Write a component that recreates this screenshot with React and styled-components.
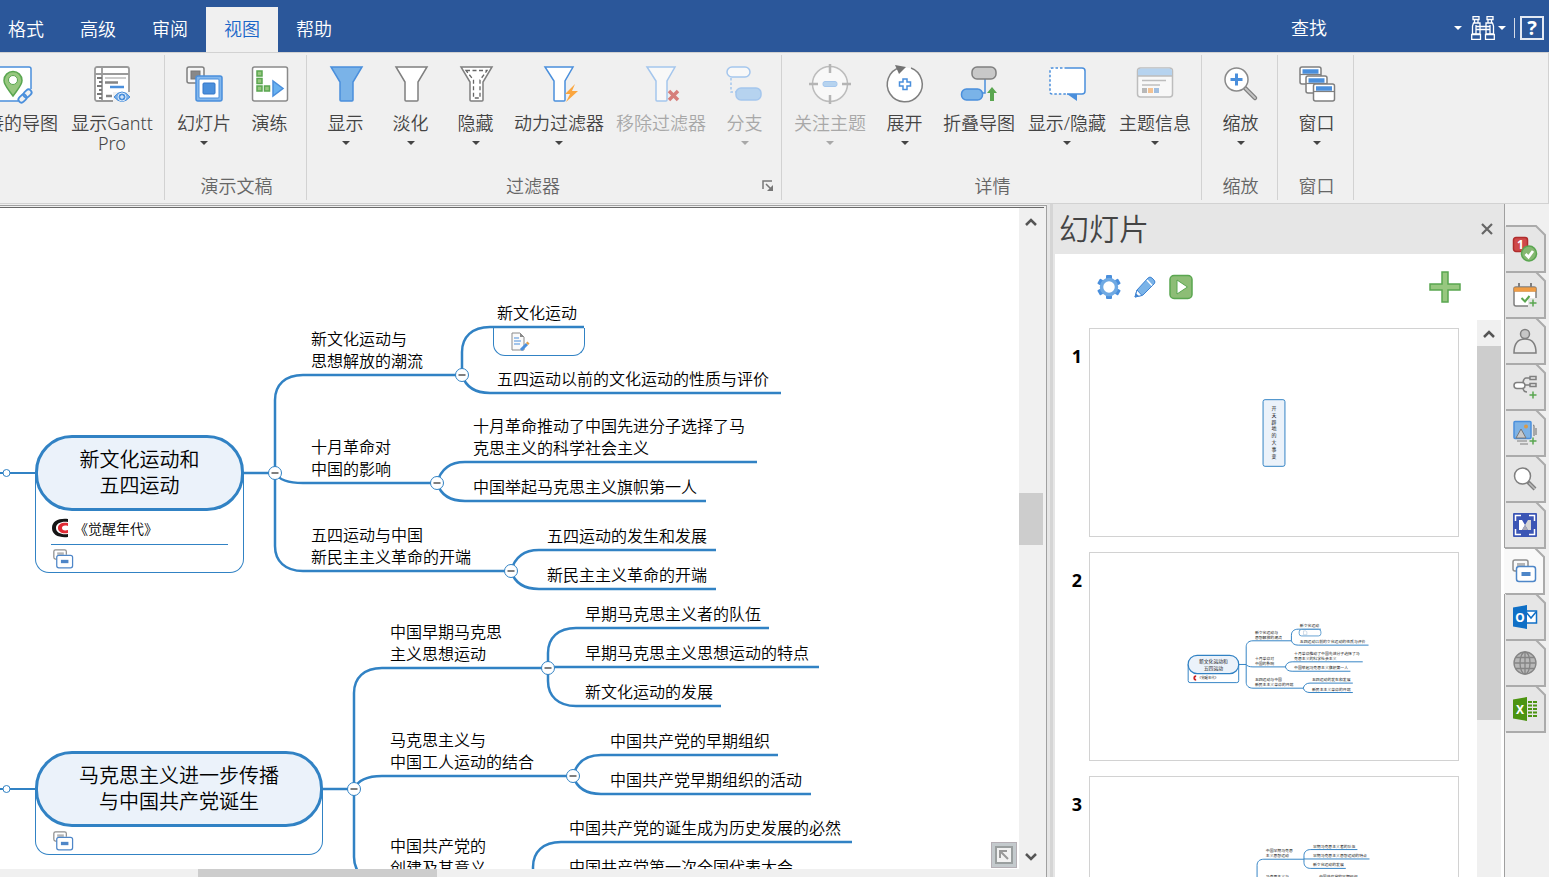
import React, { useState } from 'react';
import styled, { createGlobalStyle } from 'styled-components';

const BLUE = '#4a8fdc';
const LINE = '#3182c4';
const GRAY = '#7f7f7f';
const GREEN = '#5aa650';

const MENU_TABS = ['格式', '高级', '审阅', '视图', '帮助'];

/* ---------- mind map data ---------- */

const BRANCHES = [
  {
    id: 'may4',
    x: 35,
    y: 227,
    width: 209,
    text: ['新文化运动和', '五四运动'],
    link: '《觉醒年代》',
    hub: 275,
    children: [
      {
        x: 311, y: 167, hub: 462, text: ['新文化运动与', '思想解放的潮流'],
        children: [
          { x: 497, y: 119, end: 584, text: ['新文化运动'], note: true },
          { x: 497, y: 185, end: 781, text: ['五四运动以前的文化运动的性质与评价'] },
        ],
      },
      {
        x: 311, y: 275, hub: 437, text: ['十月革命对', '中国的影响'],
        children: [
          { x: 473, y: 254, end: 757, text: ['十月革命推动了中国先进分子选择了马', '克思主义的科学社会主义'] },
          { x: 473, y: 293, end: 706, text: ['中国举起马克思主义旗帜第一人'] },
        ],
      },
      {
        x: 311, y: 363, hub: 511, text: ['五四运动与中国', '新民主主义革命的开端'],
        children: [
          { x: 547, y: 342, end: 716, text: ['五四运动的发生和发展'] },
          { x: 547, y: 381, end: 716, text: ['新民主主义革命的开端'] },
        ],
      },
    ],
  },
  {
    id: 'marx',
    x: 35,
    y: 543,
    width: 288,
    text: ['马克思主义进一步传播', '与中国共产党诞生'],
    hub: 354,
    children: [
      {
        x: 390, y: 460, hub: 548, text: ['中国早期马克思', '主义思想运动'],
        children: [
          { x: 585, y: 420, end: 769, text: ['早期马克思主义者的队伍'] },
          { x: 585, y: 459, end: 819, text: ['早期马克思主义思想运动的特点'] },
          { x: 585, y: 498, end: 721, text: ['新文化运动的发展'] },
        ],
      },
      {
        x: 390, y: 568, hub: 573, text: ['马克思主义与', '中国工人运动的结合'],
        children: [
          { x: 610, y: 547, end: 778, text: ['中国共产党的早期组织'] },
          { x: 610, y: 586, end: 811, text: ['中国共产党早期组织的活动'] },
        ],
      },
      {
        x: 390, y: 674, hub: 533, text: ['中国共产党的', '创建及其意义'],
        children: [
          { x: 569, y: 634, end: 852, text: ['中国共产党的诞生成为历史发展的必然'] },
          { x: 569, y: 673, end: 804, text: ['中国共产党第一次全国代表大会'] },
        ],
      },
    ],
  },
];

// Rounded connector from a hub to the underline of a child topic
const connector = (hx, hy, cy, end) => {
  const dy = cy - hy;
  if (Math.abs(dy) < 2) return `M${hx} ${cy}H${end}`;
  if (Math.abs(dy) > 25) {
    const turn = dy > 0 ? cy - 25 : cy + 25;
    return `M${hx} ${hy}V${turn}C${hx} ${turn + (cy - turn) * 0.6} ${hx + 10} ${cy} ${hx + 28} ${cy}H${end}`;
  }
  return `M${hx} ${hy}C${hx + 4} ${hy + dy * 0.7} ${hx + 14} ${cy} ${hx + 28} ${cy}H${end}`;
};

const Connectors = ({ branch, thickness = 2.5 }) => {
  const middle = branch.y + 38;
  return (
    <g fill="none" stroke={LINE} strokeWidth={thickness}>
      <path d={`M${branch.x + branch.width} ${middle}H${branch.hub}`} />
      {branch.children.map((topic) => (
        <g key={topic.y}>
          <path d={connector(branch.hub, middle, topic.y, topic.hub)} />
          {topic.children.map((leaf) => (
            <path key={leaf.y} d={connector(topic.hub, topic.y, leaf.y, leaf.end)} />
          ))}
        </g>
      ))}
    </g>
  );
};

const Hub = ({ x, y }) => (
  <g>
    <circle cx={x} cy={y} r="6.5" fill="#fff" stroke={LINE} strokeWidth="1" />
    <path d={`M${x - 3.5} ${y}h7`} stroke="#555" strokeWidth="1.5" />
  </g>
);

/* ---------- icons ---------- */

const FUNNEL = 'M5 3H36L27 18V36Q27 37 26 37H15Q14 37 14 36V18Z';
const SLIM_FUNNEL = 'M6 3H34L26 17V36Q26 37 25 37H16Q15 37 15 36V17Z';

const ribbonIcons = {
  map: (
    <>
      <rect x="2" y="3" width="36" height="34" rx="2" fill="#fff" stroke={BLUE} strokeWidth="1.5" />
      <path d="M20 32C15 25 11 21 11 16.500a9 9 0 0 1 18 0C29 21 25 25 20 32Z" fill="#97c77f" stroke={GREEN} strokeWidth="1.500" />
      <circle cx="20" cy="16" r="4.500" fill="#fff" stroke={GREEN} />
      <path d="M25 34L34 25H40V40H25Z" fill="#f0f0f0" />
      <g fill="none" stroke={BLUE} strokeWidth="1.800" transform="rotate(-45 32 32)">
        <rect x="24" y="29" width="9" height="6" rx="3" />
        <rect x="31" y="29" width="9" height="6" rx="3" />
      </g>
    </>
  ),
  gantt: (
    <>
      <rect x="3" y="3" width="34" height="34" rx="2" fill="#fff" stroke="#9a9a9a" strokeWidth="1.800" />
      <path d="M3 10H37M10 3V37" stroke="#9a9a9a" strokeWidth="1.800" />
      <path d="M5 14h5M7 18h3M5 22h5M7 26h3M5 30h5M7 34h3" stroke="#777" strokeWidth="2" />
      <path d="M13 14H34" stroke="#ccc" strokeWidth="2" />
      <path d="M13 18.500H26" stroke="#858585" strokeWidth="2.500" />
      <path d="M18 23H32" stroke={BLUE} strokeWidth="2.500" />
      <path d="M21 28H40V40H21Z" fill="#f0f0f0" />
      <path d="M14 32H20" stroke="#858585" strokeWidth="2.500" />
      <path d="M22 33Q30 23 38 33Q30 42 22 33Z" fill="#79aee6" stroke={BLUE} />
      <circle cx="30" cy="33" r="4" fill={BLUE} stroke="#dbeafa" />
      <path d="M30 31v4M28 33h4" stroke="#fff" />
    </>
  ),
  slides: (
    <>
      <rect x="3" y="3" width="17" height="16" rx="2" fill="#f6f6f6" stroke={GRAY} strokeWidth="1.500" />
      <rect x="7" y="7" width="9" height="8" fill="#888" stroke="#777" />
      <rect x="12" y="12" width="26" height="25" rx="2" fill="#82b7ed" stroke={BLUE} strokeWidth="1.500" />
      <rect x="15" y="15" width="20" height="19" rx="1" fill="#fff" stroke={BLUE} />
      <rect x="19" y="19" width="12" height="11" rx="1" fill={BLUE} stroke="#3477c8" />
    </>
  ),
  rehearse: (
    <>
      <rect x="2.500" y="3" width="35" height="34" rx="2" fill="#fff" stroke="#8a8a8a" strokeWidth="1.500" />
      <g fill="#97c77f" stroke={GREEN} strokeWidth="1.500">
        <rect x="7" y="7" width="5" height="5" />
        <rect x="7" y="14.500" width="5" height="5" />
        <rect x="7" y="22" width="5" height="5" />
        <rect x="14.500" y="22" width="5" height="5" />
      </g>
      <path d="M23 17V32L33 24.500Z" fill="#68b1f0" stroke={BLUE} strokeWidth="1.500" />
    </>
  ),
  show: <path d={FUNNEL} fill="#7ab3e8" stroke={BLUE} strokeWidth="1.500" />,
  fade: <path d={FUNNEL} fill="#fff" stroke={GRAY} strokeWidth="1.500" />,
  hide: (
    <>
      <path d={FUNNEL} fill="#fff" stroke={GRAY} strokeWidth="1.500" />
      <path d="M10 6.500H31L24 16V34H17.500V16Z" fill="none" stroke="#666" strokeWidth="1.300" strokeDasharray="4 2.500" />
    </>
  ),
  power: (
    <>
      <path d={SLIM_FUNNEL} fill="#fff" stroke={BLUE} strokeWidth="1.500" />
      <path d="M36 20L26 30H31L27 38L39 27H33Z" fill="#fba63f" />
    </>
  ),
  remove: (
    <>
      <path d={SLIM_FUNNEL} fill="#f8f8f8" stroke="#a4c6ed" strokeWidth="1.500" />
      <path d="M28 27L37 36M37 27L28 36" stroke="#d67e7b" strokeWidth="3.500" />
    </>
  ),
  branch: (
    <>
      <path d="M6 14V28H11" fill="none" stroke="#a4c6ed" strokeWidth="1.500" strokeDasharray="2.500 2" />
      <rect x="2" y="3" width="23" height="10" rx="5" fill="#f8f8f8" stroke="#a4c6ed" strokeWidth="1.500" />
      <rect x="11" y="24" width="25" height="12" rx="5" fill="#b6d3ef" stroke="#a4c6ed" strokeWidth="1.500" />
    </>
  ),
  focus: (
    <>
      <circle cx="20" cy="20" r="17.500" fill="#f8f8f8" stroke="#bdbdbd" strokeWidth="1.500" />
      <path d="M20 0V9M20 31V40M-1 20H8M32 20H41" stroke="#b5b5b5" strokeWidth="2.500" />
      <rect x="13" y="17.500" width="14" height="5" rx="2" fill="#b6d3ef" stroke="#a4c6ed" />
    </>
  ),
  expand: (
    <>
      <path d="M15 3.500A17.500 17.500 0 1 0 26 4" fill="#fff" stroke={GRAY} strokeWidth="1.500" />
      <path d="M10 1L21 3L14 10Z" fill="#737373" />
      <path d="M18 15h4v3h3.500v4H22v3.500h-4V22h-3.500v-4H18Z" fill="#fff" stroke={BLUE} strokeWidth="1.500" />
    </>
  ),
  collapse: (
    <>
      <path d="M26 15V29H22" fill="none" stroke={BLUE} strokeWidth="1.500" />
      <rect x="13" y="3" width="24" height="12" rx="5" fill="#c8c8c8" stroke={GRAY} strokeWidth="1.500" />
      <rect x="2.500" y="25" width="21" height="11" rx="5" fill="#7ab3e8" stroke={BLUE} strokeWidth="1.500" />
      <path d="M33 23L38 29H35V37H31V29H28Z" fill={GREEN} />
    </>
  ),
  callout: (
    <>
      <path d="M20 4H5Q3 4 3 6V28Q3 30 5 30H20Z" fill="#fff" />
      <path d="M20 4H35Q38 4 38 7V27Q38 30 35 30H20" fill="#fff" stroke={BLUE} strokeWidth="1.500" />
      <path d="M20 4H5Q3 4 3 6V28Q3 30 5 30H20" fill="none" stroke={BLUE} strokeWidth="1.500" strokeDasharray="2.500 2" />
      <path d="M20 30H30V37Z" fill={BLUE} />
    </>
  ),
  info: (
    <>
      <rect x="2.500" y="4" width="35" height="29" rx="3" fill="#f8f8f8" stroke="#bdbdbd" strokeWidth="1.500" />
      <path d="M3 12V7Q3 4.500 6 4.500H34Q37 4.500 37 7V12Z" fill="#b6d3ef" />
      <path d="M3 12H37" stroke="#bdbdbd" strokeWidth="1.500" />
      <path d="M7 16.500H31M7 21H25" stroke="#bdbdbd" strokeWidth="1.300" />
      <path d="M7 24h5v5h-5Z" fill="#b8b8b8" />
      <path d="M13 24h5v5h-5Z" fill="#f3c293" />
      <path d="M19 24h5v5h-5Z" fill="#a1bedf" />
    </>
  ),
  zoom: (
    <>
      <path d="M24 24L34 34" stroke={GRAY} strokeWidth="4.500" strokeLinecap="round" />
      <path d="M24 24L34 34" stroke="#c5c5c5" strokeWidth="1.800" strokeLinecap="round" />
      <circle cx="15.500" cy="15.500" r="11.500" fill="#fff" stroke="#8a8a8a" strokeWidth="1.500" />
      <path d="M15.500 9.500V21.500M9.500 15.500H21.500" stroke={BLUE} strokeWidth="3" />
    </>
  ),
  windows: (
    <>
      {[[3, 3], [9, 12], [16.5, 20]].map(([x, y]) => (
        <g key={x}>
          <rect x={x} y={y} width="21" height="17" rx="2" fill="#fff" stroke={GRAY} strokeWidth="1.500" />
          <path d={`M${x + 2.5} ${y + 4.5}h16`} stroke={BLUE} strokeWidth="4.500" />
          <path d={`M${x} ${y + 7.5}h21`} stroke={GRAY} strokeWidth="1.200" />
        </g>
      ))}
    </>
  ),
};

const greenPlus = <path d="M20 16.500V23.500M16.500 20H23.500" stroke={GREEN} strokeWidth="1.500" />;

const cards = (
  <>
    <path d="M5 12H3Q1 12 1 10V3Q1 1 3 1H14Q16 1 16 3V7" fill="none" stroke="#8f8f8f" strokeWidth="1.500" />
    <path d="M5 4h8v3H5Z" fill="#b5b5b5" />
    <rect x="4.500" y="7.500" width="19" height="15" rx="2.500" fill="#fff" stroke="#4e86c8" strokeWidth="1.500" />
    <rect x="9.500" y="13" width="9" height="4" fill="#4e86c8" />
  </>
);

const sideIcons = {
  priority: (
    <>
      <rect x="0.500" y="0.500" width="14" height="14" rx="2.500" fill="#cf4a4a" stroke="#b02c2c" strokeWidth="1.500" />
      <text x="7.500" y="12" textAnchor="middle" fontSize="12" fontWeight="700" fill="#fff">1</text>
      <circle cx="16" cy="16.500" r="7.500" fill="#86b872" stroke={GREEN} strokeWidth="1.500" />
      <path d="M12.500 17L15.500 20L20 14" fill="none" stroke="#fff" strokeWidth="2.800" />
    </>
  ),
  calendar: (
    <>
      <rect x="1" y="4" width="22" height="19" rx="2" fill="#fff" stroke={GRAY} strokeWidth="1.500" />
      <path d="M1 4.500H23V8.500H1Z" fill="#f09d45" stroke="#c98238" strokeWidth="0.500" />
      <path d="M6 0V4M18 0V4" stroke={GRAY} strokeWidth="2" />
      <path d="M15 15H25V25H15Z" fill="#e6e6e6" />
      <path d="M8.500 15L12 18.500L16.500 13" fill="none" stroke={GREEN} strokeWidth="2" />
      {greenPlus}
    </>
  ),
  person: (
    <>
      <path d="M1 24Q1 10 12 10T23 24Z" fill="#e9e9e9" stroke={GRAY} strokeWidth="1.500" />
      <circle cx="12" cy="5" r="4.500" fill="#c6c6c6" stroke={GRAY} strokeWidth="1.500" />
    </>
  ),
  tree: (
    <g fill="none" stroke={GRAY} strokeWidth="1.500">
      <path d="M12 10H17M17 3H13Q11 3 10 7M10 14Q11 17 14 17" />
      <rect x="1" y="7.500" width="11" height="6" rx="3" fill="#fff" />
      <rect x="17" y="1.500" width="6" height="3" />
      <rect x="17" y="8.500" width="6" height="3" />
      {greenPlus}
    </g>
  ),
  images: (
    <>
      <path d="M20 4Q21 4 21 5V15M23 7V14M4 20H14M7 23H15" fill="none" stroke={GRAY} strokeWidth="1.200" />
      <rect x="1" y="0.500" width="17" height="17" rx="1" fill="#7db2e5" stroke={BLUE} strokeWidth="1.500" />
      <circle cx="13" cy="5.500" r="2" fill="#d99a48" />
      <path d="M3 17L8 8L13 17Z" fill="#c9c9c9" stroke="#777" />
      {greenPlus}
    </>
  ),
  search: (
    <>
      <path d="M15 15L22 22" stroke={GRAY} strokeWidth="4" />
      <path d="M16 16L22 22" stroke="#bbb" strokeWidth="1.500" />
      <circle cx="9.500" cy="9" r="8" fill="#fff" stroke={GRAY} strokeWidth="1.500" />
    </>
  ),
  focusMap: (
    <>
      <rect width="24" height="24" rx="1" fill="#3b55b5" />
      <path d="M2.500 8V2.500H8M16 2.500H21.500V8M21.500 16V21.500H16M8 21.500H2.500V16" fill="none" stroke="#fff" strokeWidth="1.500" />
      <path d="M6 7H9L12 12L9 17H6Z" fill="#fff" />
      <path d="M18 7H15L12 12L15 17H18Z" fill="#d5d5d5" />
      <path d="M12 12L15 17H9Z" fill="#a9a9b5" />
    </>
  ),
  slides: cards,
  outlook: (
    <>
      <path d="M12 6H23.500V18H12Z" fill="#fff" stroke="#0f6fc6" strokeWidth="1.500" />
      <path d="M13 7L18 13L23 7" fill="none" stroke="#0f6fc6" strokeWidth="1.500" />
      <path d="M0 2.500L14 0V24L0 21.500Z" fill="#0f6fc6" />
      <text x="7" y="16.500" textAnchor="middle" fontSize="12" fontWeight="700" fill="#fff">O</text>
    </>
  ),
  globe: (
    <g fill="none" stroke="#858585" strokeWidth="1.300">
      <circle cx="12" cy="12" r="11" fill="#b8b8b8" />
      <ellipse cx="12" cy="12" rx="5" ry="11" />
      <path d="M12 1V23M1 12H23M3 6.500H21M3 17.500H21" />
    </g>
  ),
  excel: (
    <>
      <path d="M15 5h4M20 5h4M15 8.500h4M20 8.500h4M15 12h4M20 12h4M15 15.500h4M20 15.500h4M15 19h4M20 19h4" stroke="#4c9411" strokeWidth="2" />
      <path d="M0 2.500L14 0V24L0 21.500Z" fill="#4c9411" />
      <text x="7" y="16.500" textAnchor="middle" fontSize="12" fontWeight="700" fill="#fff">X</text>
    </>
  ),
};

const RIBBON_GROUPS = [
  {
    name: '',
    items: [
      { label: '链接的导图', icon: 'map' },
      { label: '显示Gantt', second: 'Pro', icon: 'gantt', width: 96 },
    ],
  },
  {
    name: '演示文稿',
    items: [
      { label: '幻灯片', icon: 'slides', menu: true },
      { label: '演练', icon: 'rehearse' },
    ],
  },
  {
    name: '过滤器',
    launcher: true,
    items: [
      { label: '显示', icon: 'show', menu: true },
      { label: '淡化', icon: 'fade', menu: true },
      { label: '隐藏', icon: 'hide', menu: true },
      { label: '动力过滤器', icon: 'power', menu: true },
      { label: '移除过滤器', icon: 'remove', disabled: true },
      { label: '分支', icon: 'branch', menu: true, disabled: true },
    ],
  },
  {
    name: '详情',
    items: [
      { label: '关注主题', icon: 'focus', menu: true, disabled: true },
      { label: '展开', icon: 'expand', menu: true },
      { label: '折叠导图', icon: 'collapse' },
      { label: '显示/隐藏', icon: 'callout', menu: true, width: 92 },
      { label: '主题信息', icon: 'info', menu: true },
    ],
  },
  { name: '缩放', items: [{ label: '缩放', icon: 'zoom', menu: true }] },
  { name: '窗口', items: [{ label: '窗口', icon: 'windows', menu: true }] },
];

const SIDE_TABS = [
  ['priority', '标记'],
  ['calendar', '任务信息'],
  ['person', '资源'],
  ['tree', '导图部件'],
  ['images', '图库'],
  ['search', '搜索'],
  ['focusMap', '对焦'],
  ['slides', '幻灯片'],
  ['outlook', 'Outlook'],
  ['globe', '浏览器'],
  ['excel', 'Excel'],
];

const Chevron = ({ down }) => (
  <svg width="14" height="10" viewBox="0 0 14 10" aria-hidden="true">
    <path d={down ? 'M2 2L7 7L12 2' : 'M2 8L7 3L12 8'} fill="none" stroke="#555" strokeWidth="2.500" />
  </svg>
);

/* ---------- thumbnails ---------- */

const BranchPreview = ({ branch, viewBox }) => (
  <Preview viewBox={viewBox} role="img" aria-label={branch.text.join('')}>
    <Connectors branch={branch} thickness={4} />
    <path
      d={`M${branch.x} ${branch.y + 37}v68q0 8 8 8h${branch.width - 16}q8 0 8 -8v-68`}
      fill="none"
      stroke={LINE}
      strokeWidth="4"
    />
    <rect x={branch.x} y={branch.y} width={branch.width} height="76" rx="37" fill="#ebf2fa" stroke={LINE} strokeWidth="5" />
    {branch.text.map((line, i) => (
      <text key={line} x={branch.x + branch.width / 2} y={branch.y + 33 + i * 26} fontSize="20" textAnchor="middle">{line}</text>
    ))}
    {branch.link && (
      <>
        <path d="M68 313a8 8 0 0 0 0 16" fill="none" stroke="#c22" strokeWidth="7" />
        <text x="75" y="326" fontSize="14">{branch.link}</text>
      </>
    )}
    {branch.children.flatMap((topic) => [topic, ...topic.children]).map((topic) => (
      <g key={topic.text[0]}>
        {topic.text.map((line, i) => (
          <text key={line} x={topic.x} y={topic.y - 8 - (topic.text.length - 1 - i) * 22} fontSize="16">{line}</text>
        ))}
        {topic.note && (
          <>
            <rect x="494" y="120" width="90" height="27" rx="10" fill="#fff" stroke={LINE} strokeWidth="3" />
            <path d="M512 126h10l4 4v12h-14Z" fill="none" stroke="#9db8d4" strokeWidth="2" />
          </>
        )}
      </g>
    ))}
  </Preview>
);

const CoverPreview = () => (
  <Preview viewBox="0 0 370 208" role="img" aria-label="开天辟地的大事变">
    <rect x="174" y="71" width="22" height="67" rx="2" fill="#ebf2fa" stroke={LINE} />
    {[...'开天辟地的大事变'].map((char, i) => (
      <text key={char} x="185" y={81 + i * 7} fontSize="5" textAnchor="middle">{char}</text>
    ))}
  </Preview>
);

const SLIDES = [
  <CoverPreview />,
  <BranchPreview branch={BRANCHES[0]} viewBox="-371 -196 1522 856" />,
  <BranchPreview branch={BRANCHES[1]} viewBox="-337 120 1522 856" />,
];

const MindMap = () => (
  <MapArea>
    <MapLines aria-hidden="true">
      {BRANCHES.map((branch) => (
        <g key={branch.id}>
          <path d={`M0 ${branch.y + 38}H${branch.x}`} stroke={LINE} strokeWidth="2" />
          <circle cx="6.500" cy={branch.y + 38} r="3.500" fill="#fff" stroke={LINE} />
          <Connectors branch={branch} />
          {branch.children.map((topic) => <Hub key={topic.y} x={topic.hub} y={topic.y} />)}
          <Hub x={branch.hub} y={branch.y + 38} />
        </g>
      ))}
    </MapLines>
    {BRANCHES.map((branch) => (
      <React.Fragment key={branch.id}>
        <MainTopic $x={branch.x} $y={branch.y} $width={branch.width}>
          <Pill>{branch.text.map((line) => <div key={line}>{line}</div>)}</Pill>
          <Attachments>
            {branch.link && (
              <LinkRow href="#juexing">
                <svg width="18" height="20" viewBox="0 0 18 20" aria-hidden="true">
                  <path d="M17 1C8 0 1 3 1 10S8 20 17 19V16C11 17 5 15 5 10S11 3 17 4Z" fill="#151515" />
                  <path d="M17 5C11 4 7 6 7 10S11 16 17 15V12C13 13 11 12 11 10S13 7 17 8Z" fill="#e02b35" />
                </svg>
                {branch.link}
              </LinkRow>
            )}
            <CardRow>
              <svg width="20" height="20" viewBox="0 0 24 24" aria-hidden="true">{cards}</svg>
            </CardRow>
          </Attachments>
        </MainTopic>
        {branch.children.flatMap((topic) => [topic, ...topic.children]).map((topic) => (
          <Topic key={topic.text[0]} $x={topic.x} $y={topic.y - 3 - topic.text.length * 22}>
            {topic.text.map((line) => <div key={line}>{line}</div>)}
          </Topic>
        ))}
      </React.Fragment>
    ))}
    <NoteBox>
      <svg width="20" height="20" viewBox="0 0 20 20" aria-hidden="true">
        <path d="M2 1H10L14 5V18H2Z" fill="#fafafa" stroke="#8a8a8a" />
        <path d="M10 1V5H14Z" fill="#8a8a8a" />
        <path d="M4 6h5M4 9h7M4 12h6" stroke={BLUE} />
        <path d="M11 18L17 12" stroke={BLUE} strokeWidth="3" />
        <path d="M17 12L18.500 10.500" stroke="#e0a050" strokeWidth="3" />
      </svg>
    </NoteBox>
    <OverviewButton aria-label="导图概览">
      <svg width="14" height="14" viewBox="0 0 14 14">
        <path d="M3 10V3H10M4 4L11 11" fill="none" stroke="#999" strokeWidth="2" />
      </svg>
    </OverviewButton>
  </MapArea>
);

export default function App() {
  const [menuTab, setMenuTab] = useState('视图');
  const [sideTab, setSideTab] = useState('slides');
  const [query, setQuery] = useState('查找');

  return (
    <Window>
      <GlobalStyle />
      <TopBar>
        <MenuTabs>
          {MENU_TABS.map((tab) => (
            <MenuTab key={tab} $active={tab === menuTab} onClick={() => setMenuTab(tab)}>{tab}</MenuTab>
          ))}
        </MenuTabs>
        <SearchTools>
          <SearchInput aria-label="查找" value={query} onChange={(e) => setQuery(e.target.value)} />
          <ArrowButton aria-label="查找历史"><Caret /></ArrowButton>
          <BinocularButton aria-label="开始查找">
            <svg width="24" height="24" viewBox="0 0 24 24" fill="none" stroke="#fff" strokeWidth="1.300">
              <path d="M2 0.700H8V3.500H2ZM16 0.700H22V3.500H16ZM3.500 3.500V7M7 3.500V7M17 3.500V7M20.500 3.500V7" />
              <path d="M2.500 7H9V18H1.500V10ZM15 7H21.500L22.500 10V18H15ZM5 9V18M19 9V18M5 10.500H19M5 13.500H19" />
              <path d="M0.700 18.500H9.500V23.300H0.700ZM14.500 18.500H23.300V23.300H14.500Z" />
            </svg>
          </BinocularButton>
          <ArrowButton aria-label="查找选项"><Caret /></ArrowButton>
          <Divider />
          <HelpButton aria-label="帮助">?</HelpButton>
        </SearchTools>
      </TopBar>

      <Ribbon>
        <RibbonGroups>
          {RIBBON_GROUPS.map((group) => (
            <Group key={group.name}>
              <GroupItems>
                {group.items.map((item) => (
                  <RibbonButton key={item.label} disabled={item.disabled} $width={item.width}>
                    <RibbonIcon viewBox="0 0 40 40" aria-hidden="true">{ribbonIcons[item.icon]}</RibbonIcon>
                    <span>{item.label}</span>
                    {item.second && <span>{item.second}</span>}
                    {item.menu && <MenuCaret />}
                  </RibbonButton>
                ))}
              </GroupItems>
              <GroupFooter $launcher={group.launcher}>
                {group.name}
                {group.launcher && (
                  <Launcher aria-label="过滤器选项">
                    <svg width="12" height="12" viewBox="0 0 12 12">
                      <path d="M1 9V1H10M4 4L9 9" fill="none" stroke="#777" strokeWidth="1.500" />
                      <path d="M11 5V11H5Z" fill="#777" />
                    </svg>
                  </Launcher>
                )}
              </GroupFooter>
            </Group>
          ))}
        </RibbonGroups>
      </Ribbon>

      <Workspace>
        <CanvasFrame>
          <CanvasInner>
            <MindMap />
            <Scrollbar>
              <ScrollButton aria-label="向上滚动"><Chevron /></ScrollButton>
              <ScrollTrack $before={259} $thumb={52}><i /></ScrollTrack>
              <ScrollButton aria-label="向下滚动"><Chevron down /></ScrollButton>
            </Scrollbar>
            <HorizontalBar><i /></HorizontalBar>
          </CanvasInner>
        </CanvasFrame>
        <Splitter />
        <Panel>
          <PanelHeader>
            <PanelTitle>幻灯片</PanelTitle>
            <CloseButton aria-label="关闭">
              <svg width="12" height="12" viewBox="0 0 12 12">
                <path d="M1 1L11 11M11 1L1 11" stroke="#666" strokeWidth="2.200" />
              </svg>
            </CloseButton>
          </PanelHeader>
          <PanelToolbar>
            <ToolButton aria-label="设置">
              <svg width="24" height="24" viewBox="0 0 24 24">
                {[0, 60, 120, 180, 240, 300].map((angle) => (
                  <rect key={angle} x="9" y="0" width="6" height="6" rx="1" fill={BLUE} transform={`rotate(${angle} 12 12)`} />
                ))}
                <circle cx="12" cy="12" r="7.500" fill="#fff" stroke="#6fa9e3" strokeWidth="3.500" />
              </svg>
            </ToolButton>
            <ToolButton aria-label="编辑">
              <svg width="24" height="24" viewBox="0 0 24 24">
                <path d="M2 22L4 15L15 3Q17 1 19 3L21 5Q23 7 21 9L10 20Z" fill="#7ab3e8" stroke="#3f83d2" />
                <path d="M2 22L4 15L9 20.500Z" fill="#fff" stroke="#3f83d2" />
                <path d="M2 22L3 18.500L6 21Z" fill="#3f83d2" />
                <path d="M14 5L19 10.500" stroke="#fff" strokeWidth="1.500" />
              </svg>
            </ToolButton>
            <ToolButton aria-label="播放">
              <svg width="24" height="24" viewBox="0 0 24 24">
                <rect x="1" y="0.500" width="22" height="23" rx="4" fill="#8dbd76" stroke={GREEN} strokeWidth="1.500" />
                <path d="M8 5V19L18.500 12Z" fill="#fff" stroke={GREEN} />
              </svg>
            </ToolButton>
            <AddButton aria-label="新建幻灯片">
              <svg width="32" height="32" viewBox="0 0 32 32">
                <path d="M13 1H19V13H31V19H19V31H13V19H1V13H13Z" fill="#97c77f" stroke={GREEN} strokeWidth="1.500" />
              </svg>
            </AddButton>
          </PanelToolbar>
          <SlideArea>
            <SlideList>
              {SLIDES.map((slide, i) => (
                <SlideItem key={i}>
                  <SlideNumber>{i + 1}</SlideNumber>
                  <SlideFrame>{slide}</SlideFrame>
                </SlideItem>
              ))}
            </SlideList>
            <Scrollbar>
              <ScrollButton aria-label="向上滚动"><Chevron /></ScrollButton>
              <ScrollTrack $before={0} $thumb={374}><i /></ScrollTrack>
            </Scrollbar>
          </SlideArea>
        </Panel>
        <SideBar>
          {SIDE_TABS.map(([id, label]) => (
            <SideTab key={id} aria-label={label} $active={id === sideTab} onClick={() => setSideTab(id)}>
              <svg width="42" height="48" viewBox="0 0 42 48">
                <path d="M0 1H31L40 10V47H0Z" fill={id === sideTab ? '#f9f9f9' : '#e6e6e6'} />
                <path d="M1 1H31L40 10V47H1" fill="none" stroke="#ababab" strokeWidth="2" />
                <g transform="translate(8 12)">{sideIcons[id]}</g>
              </svg>
            </SideTab>
          ))}
        </SideBar>
      </Workspace>
    </Window>
  );
}

/* ---------- styles ---------- */

const GlobalStyle = createGlobalStyle`
  * {
    box-sizing: border-box;
  }

  body {
    margin: 0;
    overflow: hidden;
  }

  body, button, input {
    font-family: "Noto Sans", "Noto Sans CJK SC", sans-serif;
    font-weight: 350;
  }

  button {
    padding: 0;
    border: 0;
    background: none;
  }

  svg {
    display: block;
    overflow: visible;
  }
`;

const Window = styled.div`
  display: flex;
  flex-direction: column;
  height: 100vh;
  background: #f0f0f0;
`;

const TopBar = styled.header`
  display: flex;
  justify-content: space-between;
  flex: none;
  height: 52px;
  background: #2b579a;
  color: #fff;
`;

const MenuTabs = styled.nav`
  display: flex;
  align-items: flex-end;
  margin-left: -10px;
`;

const MenuTab = styled.button`
  width: 72px;
  height: 45px;
  padding-bottom: 2px;
  font-size: 18px;
  line-height: 24px;
  color: ${({ $active }) => ($active ? '#1a66c8' : '#fff')};
  background: ${({ $active }) => ($active ? '#f0f0f0' : 'transparent')};
`;

const SearchTools = styled.div`
  display: flex;
  align-items: center;
  padding: 4px 5px 0 0;
`;

const SearchInput = styled.input`
  width: 160px;
  padding: 0;
  border: 0;
  outline: none;
  background: transparent;
  color: #fff;
  font-size: 18px;
  line-height: 24px;
`;

const ArrowButton = styled.button`
  display: flex;
  align-items: center;
  justify-content: center;
  width: 14px;
  height: 24px;
`;

const Caret = styled.span`
  border: 4px solid transparent;
  border-top-color: currentColor;
  border-bottom: 0;
  color: #fff;
`;

const BinocularButton = styled.button`
  margin-left: 6px;
`;

const Divider = styled.span`
  width: 1px;
  height: 20px;
  margin: 0 5px;
  background: #d5dce8;
`;

const HelpButton = styled.button`
  width: 24px;
  height: 24px;
  border: 2px solid #e3e9f3;
  color: #fff;
  font-size: 20px;
  font-weight: 700;
  line-height: 20px;
`;

const Ribbon = styled.section`
  flex: none;
  height: 152px;
  border: 1px solid #d2d2d2;
  border-left: 0;
  overflow: hidden;
`;

const RibbonGroups = styled.div`
  display: flex;
  height: 100%;
  margin-left: -44px;
  padding: 2px 0 3px;
`;

const Group = styled.div`
  display: flex;
  flex-direction: column;
  justify-content: space-between;
  flex: none;
  padding: 9px 4px 2px 6px;
  border-right: 1px solid #d2d2d2;
`;

const GroupItems = styled.div`
  display: flex;
`;

const RibbonButton = styled.button`
  display: flex;
  flex-direction: column;
  align-items: center;
  min-width: ${({ $width }) => $width || 65}px;
  padding: 0 6px;
  font-size: 18px;
  line-height: 20px;
  white-space: nowrap;
  color: #444;

  &:disabled {
    color: #a8a8a8;
  }
`;

const RibbonIcon = styled.svg`
  width: 40px;
  height: 40px;
  margin-bottom: 9px;
`;

const MenuCaret = styled(Caret)`
  margin-top: 8px;
  color: inherit;
`;

const GroupFooter = styled.div`
  position: relative;
  height: 24px;
  padding-right: ${({ $launcher }) => ($launcher ? 24 : 0)}px;
  font-size: 18px;
  line-height: 24px;
  text-align: center;
  color: #666;
`;

const Launcher = styled.button`
  position: absolute;
  right: 3px;
  bottom: 6px;
`;

const Workspace = styled.main`
  display: flex;
  flex: 1;
  min-height: 0;
`;

const CanvasFrame = styled.section`
  flex: 1;
  min-width: 0;
  margin-top: 1px;
  padding: 1px 2px 0 0;
  border-top: 1px solid #a0a0a0;
  border-right: 1px solid #a0a0a0;
`;

const CanvasInner = styled.div`
  display: grid;
  grid-template-columns: minmax(0, 1fr) 25px;
  grid-template-rows: minmax(0, 1fr) 8px;
  height: 100%;
  border-top: 1px solid #696969;
`;

const MapArea = styled.div`
  position: relative;
  overflow: hidden;
  background: #fff;
  color: #000;
`;

const MapLines = styled.svg`
  position: absolute;
  top: 0;
  left: 0;
  width: 100%;
  height: 100%;
`;

const MainTopic = styled.div`
  position: absolute;
  left: ${({ $x }) => $x}px;
  top: ${({ $y }) => $y}px;
  width: ${({ $width }) => $width}px;
`;

const Pill = styled.div`
  position: relative;
  z-index: 1;
  height: 76px;
  padding-top: 9px;
  border: 3px solid ${LINE};
  border-radius: 37px;
  background: #ebf2fa;
  font-size: 20px;
  line-height: 26px;
  text-align: center;
`;

const Attachments = styled.div`
  margin-top: -38px;
  padding: 38px 15px 0;
  border: 1px solid ${LINE};
  border-top: 0;
  border-radius: 0 0 14px 14px;
  background: #fff;
`;

const LinkRow = styled.a`
  display: flex;
  align-items: center;
  gap: 5px;
  height: 34px;
  border-bottom: 1px solid ${LINE};
  color: #000;
  font-size: 14px;
  text-decoration: none;
`;

const CardRow = styled.div`
  height: 27px;
  padding: 4px 2px 0;
`;

const Topic = styled.div`
  position: absolute;
  left: ${({ $x }) => $x}px;
  top: ${({ $y }) => $y}px;
  font-size: 16px;
  line-height: 22px;
  white-space: nowrap;
`;

const NoteBox = styled.div`
  position: absolute;
  left: 493px;
  top: 120px;
  width: 92px;
  height: 28px;
  padding: 4px 16px;
  border: 1px solid ${LINE};
  border-top: 0;
  border-radius: 0 0 12px 12px;
`;

const OverviewButton = styled.button`
  position: absolute;
  right: 2px;
  bottom: 1px;
  display: flex;
  align-items: center;
  justify-content: center;
  width: 26px;
  height: 26px;
  border: 4px solid #c4cacd;
  outline: 1px solid #b5afb5;
  outline-offset: -1px;
  background: #f2f2f2;
  box-shadow: inset 0 0 0 2px #9a9f9f;
`;

const Scrollbar = styled.div`
  display: flex;
  flex-direction: column;
  width: 24px;
  background: #f0f0f0;
`;

const ScrollButton = styled.button`
  display: flex;
  align-items: center;
  justify-content: center;
  flex: none;
  height: 26px;
  padding-top: 2px;
`;

const ScrollTrack = styled.div`
  flex: 1;
  padding-top: ${({ $before }) => $before}px;

  i {
    display: block;
    height: ${({ $thumb }) => $thumb}px;
    background: #cdcdcd;
  }
`;

const HorizontalBar = styled.div`
  grid-column: 1 / -1;
  background: #f0f0f0;

  i {
    display: block;
    width: 239px;
    height: 100%;
    margin-left: 198px;
    background: #cdcdcd;
  }
`;

const Splitter = styled.div`
  flex: none;
  width: 6px;
  border-right: 3px solid #d5d5d5;
  background: #e6e6e6;
`;

const Panel = styled.aside`
  display: flex;
  flex-direction: column;
  flex: none;
  width: 451px;
  padding-left: 2px;
  background: linear-gradient(to right, #e6e6e6 2px, #fff 2px);
`;

const PanelHeader = styled.header`
  display: flex;
  align-items: center;
  justify-content: space-between;
  flex: none;
  height: 50px;
  padding: 0 11px 0 4px;
  background: #e6e6e6;
`;

const PanelTitle = styled.h2`
  margin: 0;
  font-size: 30px;
  font-weight: 350;
  line-height: 40px;
  color: #444;
`;

const CloseButton = styled.button`
  width: 12px;
  height: 12px;
`;

const PanelToolbar = styled.div`
  display: flex;
  align-items: center;
  gap: 12px;
  flex: none;
  height: 66px;
  padding: 0 43px 0 42px;
`;

const ToolButton = styled.button`
  width: 24px;
  height: 24px;
`;

const AddButton = styled.button`
  width: 32px;
  height: 32px;
  margin-left: auto;
`;

const SlideArea = styled.div`
  display: flex;
  flex: 1;
  min-height: 0;
  padding-right: 3px;
`;

const SlideList = styled.ol`
  display: flex;
  flex-direction: column;
  gap: 15px;
  flex: 1;
  margin: 0;
  padding: 8px 18px 0 0;
  overflow: hidden;
  list-style: none;
`;

const SlideItem = styled.li`
  display: flex;
  flex: none;
`;

const SlideNumber = styled.span`
  width: 34px;
  padding: 16px 7px 0 0;
  font-size: 18px;
  font-weight: 700;
  line-height: 24px;
  text-align: right;
`;

const SlideFrame = styled.div`
  flex: 1;
  height: 209px;
  border: 1px solid #d2d2d2;
  background: #fff;
`;

const Preview = styled.svg`
  width: 100%;
  height: 100%;
  overflow: hidden;
`;

const SideBar = styled.nav`
  flex: none;
  width: 45px;
  padding-top: 21px;
  border-left: 1px solid #a0a0a0;
`;

const SideTab = styled.button`
  display: block;
  width: 43px;
  height: 46px;

  svg {
    margin-left: ${({ $active }) => ($active ? '-1px' : '0')};
  }
`;
